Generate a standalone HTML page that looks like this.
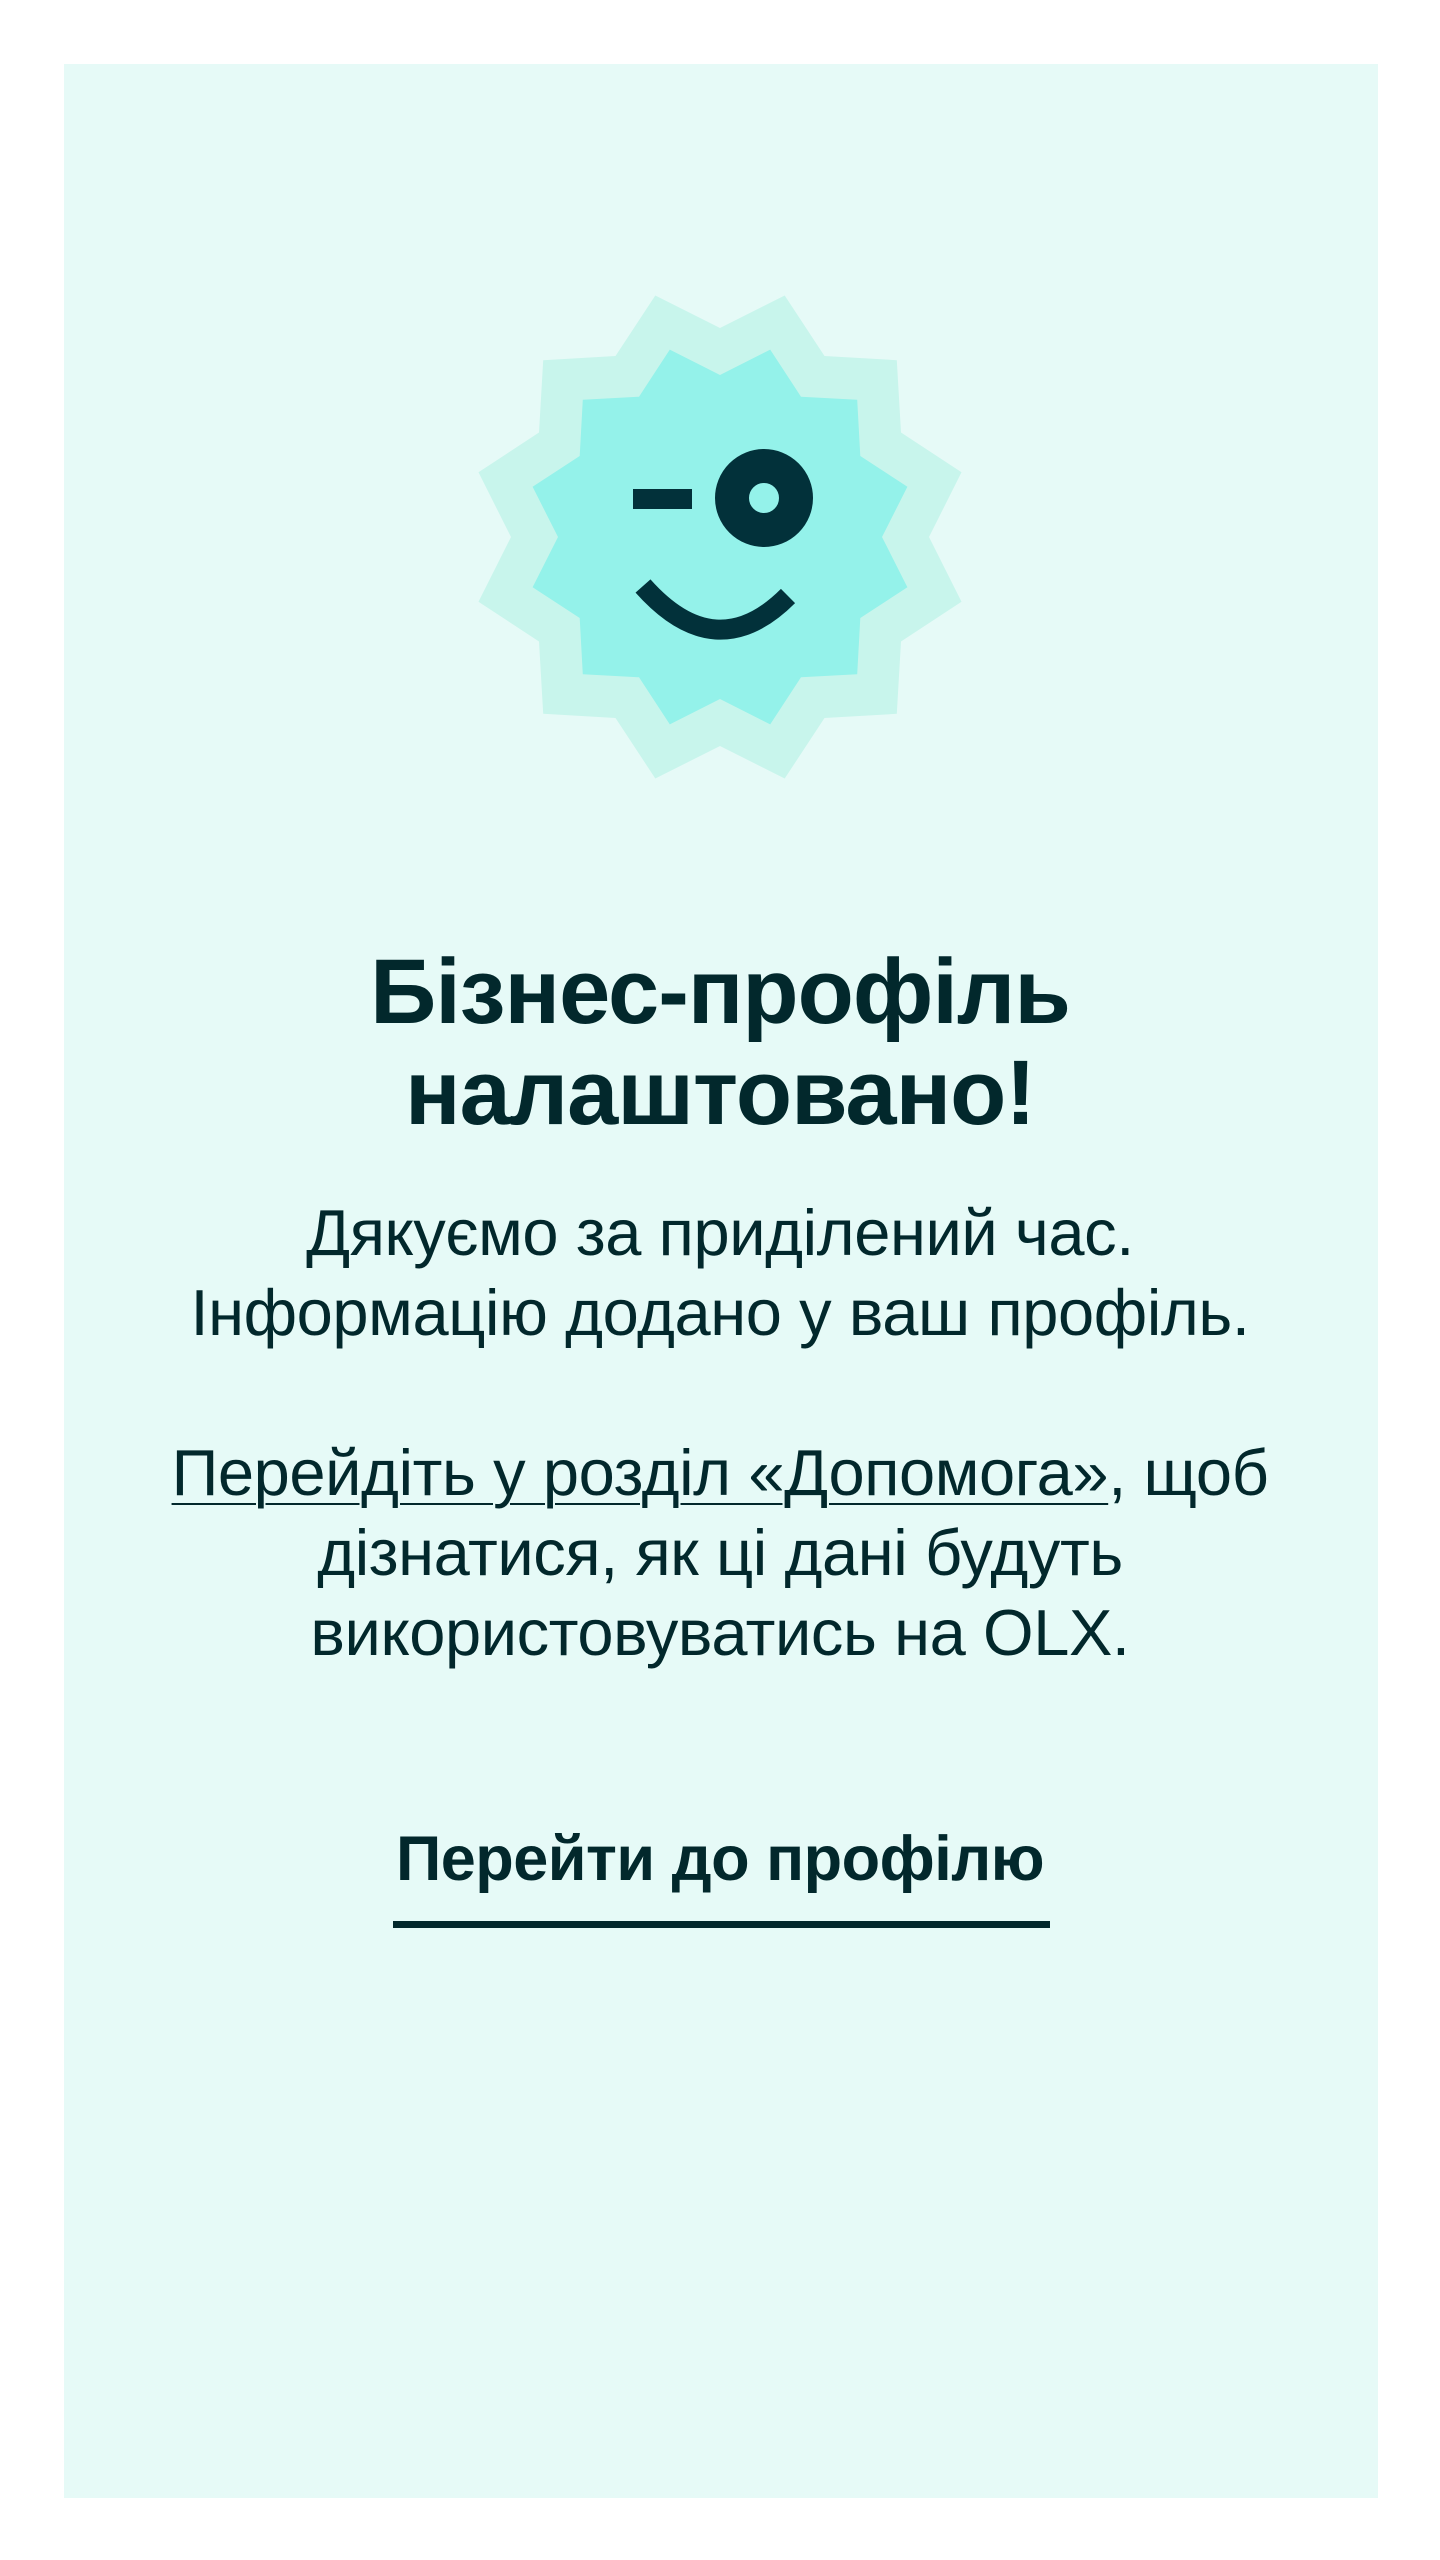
<!DOCTYPE html>
<html><head><meta charset="utf-8"><style>
html,body{margin:0;padding:0;width:1440px;height:2560px;background:#fff;overflow:hidden}
.panel{position:absolute;left:64px;top:64px;width:1314px;height:2434px;background:#e6faf7}
.t{position:absolute;left:0;width:1440px;text-align:center;color:#02282c;font-family:"Liberation Sans","DejaVu Sans",sans-serif;white-space:nowrap}
.title{top:942px;font-size:92px;line-height:101px;font-weight:bold;letter-spacing:-1px}
.body{font-size:65px;line-height:80px;letter-spacing:-0.4px}
.body a{color:#02282c;text-decoration:underline;text-decoration-thickness:2px;text-underline-offset:8px}
.btn{top:1824px;font-size:63px;line-height:70px;font-weight:bold;letter-spacing:-0.5px}
.ul{position:absolute;left:393px;width:657px;top:1921px;height:7px;background:#02282c}
</style></head><body>
<div class="panel"></div>
<svg style="position:absolute;left:0;top:0" width="1440" height="900">
<g transform="translate(720,537)">
<polygon fill="#c8f5ec" points="
0,-209 64.7,-241.5 104.5,-181 176.8,-176.8 181,-104.5 241.5,-64.7 209,0 241.5,64.7 181,104.5 176.8,176.8 104.5,181 64.7,241.5 0,209 -64.7,241.5 -104.5,181 -176.8,176.8 -181,104.5 -241.5,64.7 -209,0 -241.5,-64.7 -181,-104.5 -176.8,-176.8 -104.5,-181 -64.7,-241.5"/>
<polygon fill="#94f2ea" points="
0,-162 50.2,-187.4 81,-140.3 137.2,-137.2 140.3,-81 187.4,-50.2 162,0 187.4,50.2 140.3,81 137.2,137.2 81,140.3 50.2,187.4 0,162 -50.2,187.4 -81,140.3 -137.2,137.2 -140.3,81 -187.4,50.2 -162,0 -187.4,-50.2 -140.3,-81 -137.2,-137.2 -81,-140.3 -50.2,-187.4"/>
</g>
<rect x="633" y="489" width="59" height="20" fill="#02313a"/>
<ellipse cx="764" cy="498" rx="32" ry="32" fill="none" stroke="#02313a" stroke-width="34"/>
<path d="M643 586 Q716 668 788 596" fill="none" stroke="#02313a" stroke-width="20"/>
</svg>
<div class="t title">Бізнес-профіль<br>налаштовано!</div>
<div class="t body" style="top:1193px">Дякуємо за приділений час.<br>Інформацію додано у ваш профіль.</div>
<div class="t body" style="top:1433px"><a>Перейдіть у розділ «Допомога»</a>, щоб<br>дізнатися, як ці дані будуть<br>використовуватись на OLX.</div>
<div class="t btn">Перейти до профілю</div>
<div class="ul"></div>
</body></html>
